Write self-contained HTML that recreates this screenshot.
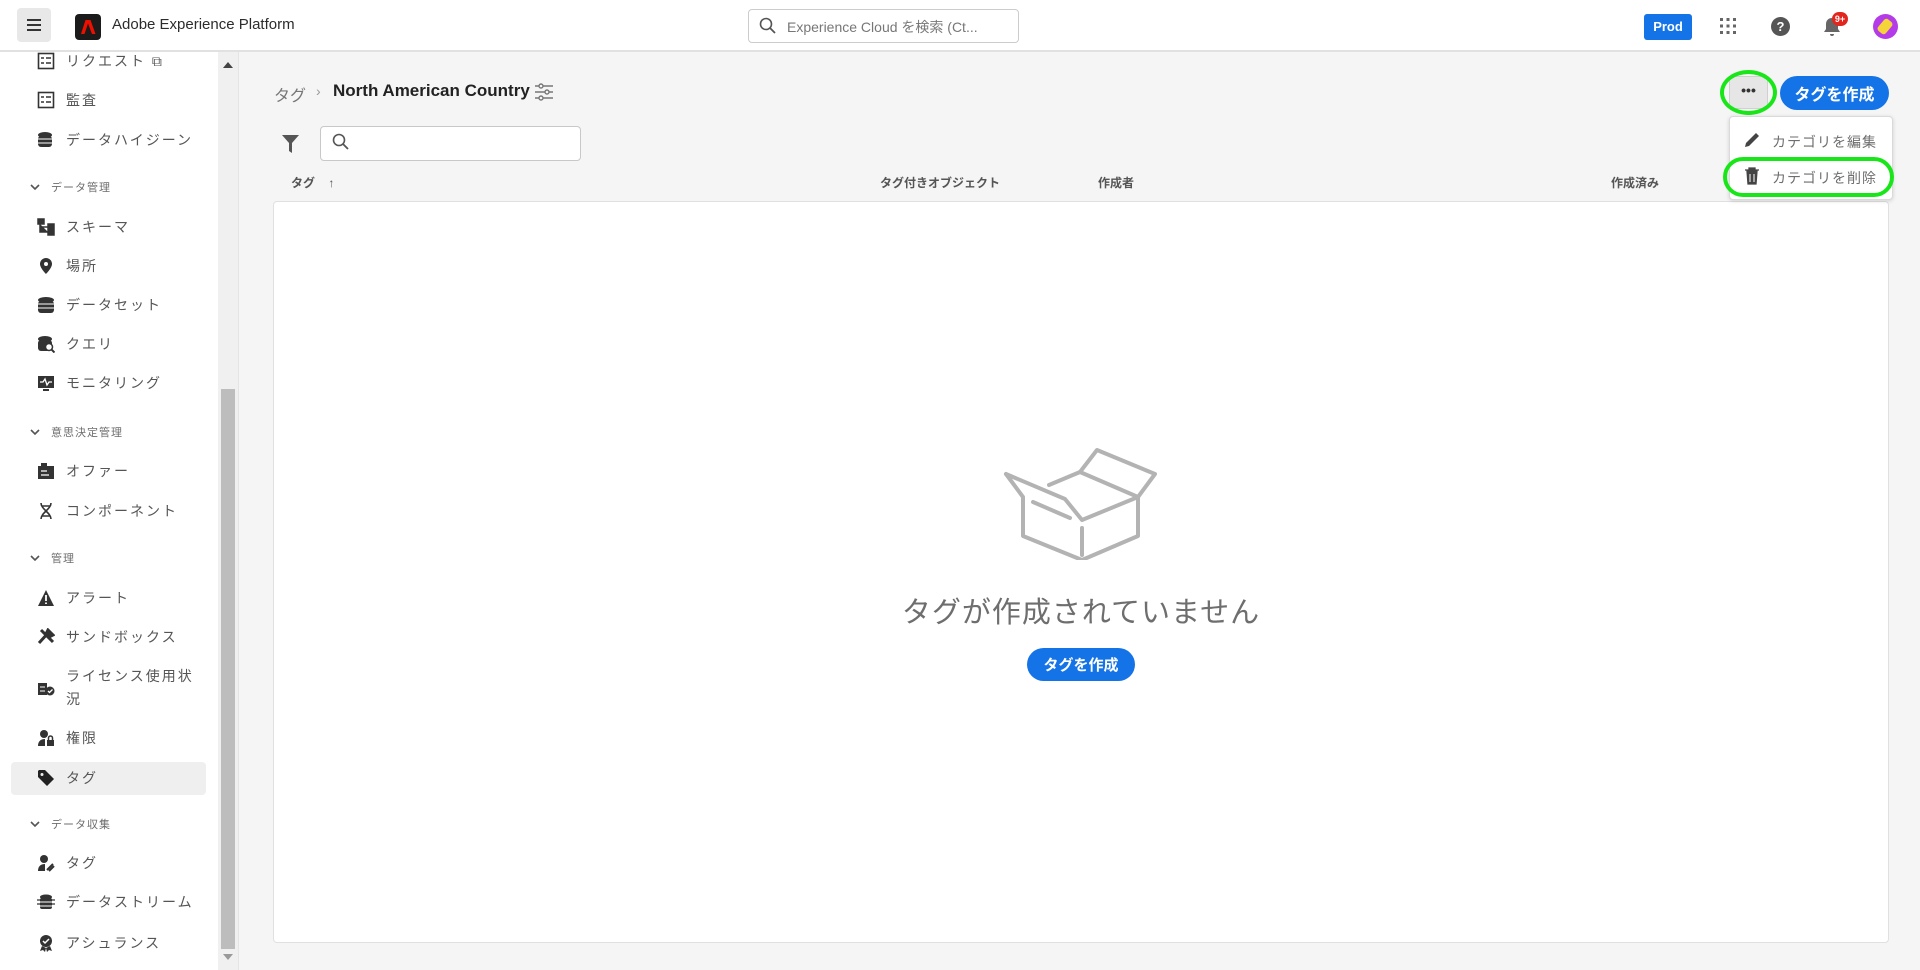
<!DOCTYPE html>
<html><head><meta charset="utf-8"><style>
*{box-sizing:border-box;margin:0;padding:0}
body{width:1920px;height:970px;overflow:hidden;background:#f5f5f5;font-family:"Liberation Sans","Noto Sans CJK JP",sans-serif;position:relative;color:#2c2c2c}
.abs{position:absolute}
header{position:absolute;left:0;top:0;width:1920px;height:52px;background:#fff;border-bottom:2px solid #e1e1e1}
.side{position:absolute;left:0;top:52px;width:218px;height:918px;background:#fff}
.sb{position:absolute;left:218px;top:52px;width:21px;height:918px;background:#f0f0f0;border-right:1px solid #e4e4e4}
.item{position:absolute;left:66px;font-size:14px;letter-spacing:2px;color:#555;transform:translateY(-50%)}
.ic{position:absolute;left:37px;width:18px;height:18px;transform:translateY(-50%)}
.sec{position:absolute;left:51px;font-size:11px;letter-spacing:1px;color:#6e6e6e;transform:translateY(-50%)}
.chev{position:absolute;left:30px;width:10px;height:10px;transform:translateY(-50%)}
.btn{position:absolute;background:#1473e6;color:#fff;font-weight:bold;border-radius:18px;font-size:15px;display:flex;align-items:center;justify-content:center}
.col{position:absolute;top:174px;font-size:12px;font-weight:bold;color:#555}
</style></head><body>
<header>
 <div class="abs" style="left:17px;top:8px;width:34px;height:34px;background:#e8e8e8;border-radius:4px"></div>
 <div class="abs" style="left:27px;top:19px;width:14px;height:2px;background:#333;box-shadow:0 5px 0 #333,0 10px 0 #333"></div>
 <div class="abs" style="left:75px;top:14px;width:26px;height:26px;background:#1b1b1b;border-radius:4px"></div>
 <svg class="abs" style="left:80px;top:19px" width="16" height="16" viewBox="0 0 16 16"><path d="M5.5 1h5l5 14h-3.5L8 4.5 4.5 15H1z" fill="#eb1000"/></svg>
 <div class="abs" style="left:112px;top:16px;font-size:15px;color:#2c2c2c">Adobe Experience Platform</div>
 <div class="abs" style="left:748px;top:9px;width:271px;height:34px;border:1px solid #ccc;border-radius:4px;background:#fff"></div>
 <svg class="abs" style="left:759px;top:17px" width="18" height="18" viewBox="0 0 18 18"><circle cx="7" cy="7" r="5.5" fill="none" stroke="#555" stroke-width="1.6"/><path d="M11 11l5 5" stroke="#555" stroke-width="1.8"/></svg>
 <div class="abs" style="left:787px;top:17px;font-size:14px;color:#777">Experience Cloud を検索 (Ct...</div>
 <div class="abs" style="left:1644px;top:14px;width:48px;height:26px;background:#1473e6;border-radius:3px;color:#fff;font-weight:bold;font-size:13px;text-align:center;line-height:26px">Prod</div>
 <svg class="abs" style="left:1719px;top:17px" width="18" height="18" viewBox="0 0 18 18" fill="#666"><rect x="1" y="1" width="3" height="3"/><rect x="7.5" y="1" width="3" height="3"/><rect x="14" y="1" width="3" height="3"/><rect x="1" y="7.5" width="3" height="3"/><rect x="7.5" y="7.5" width="3" height="3"/><rect x="14" y="7.5" width="3" height="3"/><rect x="1" y="14" width="3" height="3"/><rect x="7.5" y="14" width="3" height="3"/><rect x="14" y="14" width="3" height="3"/></svg>
 <div class="abs" style="left:1771px;top:17px;width:19px;height:19px;border-radius:50%;background:#555;color:#fff;font-weight:bold;font-size:13px;text-align:center;line-height:19px">?</div>
 <svg class="abs" style="left:1822px;top:16px" width="20" height="22" viewBox="0 0 20 22"><path d="M10 2c-4 0-6 3-6 6v5l-2 3h16l-2-3V8c0-3-2-6-6-6z M8 18a2 2 0 004 0z" fill="#666"/></svg>
 <div class="abs" style="left:1832px;top:12px;width:16px;height:14px;border-radius:7px;background:#e0261e;color:#fff;font-size:9px;font-weight:bold;text-align:center;line-height:14px">9+</div>
 <div class="abs" style="left:1873px;top:14px;width:25px;height:25px;border-radius:50%;background:#b43ce8"></div>
 <div class="abs" style="left:1880px;top:19px;width:10px;height:15px;background:#f5d43a;border-radius:3px;transform:rotate(40deg)"></div>
</header>

<div class="side"></div>
<div class="sb"><div class="abs" style="left:3px;top:337px;width:14px;height:560px;background:#bdbdbd"></div>
 <div class="abs" style="left:5px;top:10px;width:0;height:0;border-left:5px solid transparent;border-right:5px solid transparent;border-bottom:6px solid #444"></div>
 <div class="abs" style="left:5px;top:902px;width:0;height:0;border-left:5px solid transparent;border-right:5px solid transparent;border-top:6px solid #999"></div>
</div>

<div class="abs" style="left:11px;top:762px;width:195px;height:33px;background:#efefef;border-radius:4px"></div>

<svg class="ic" style="top:61px" viewBox="0 0 18 18"><rect x="1.5" y="1.5" width="15" height="15" fill="none" stroke="#333" stroke-width="1.6"/><path d="M4 6h3M4 11h3M9 6h5M9 11h5" stroke="#333" stroke-width="1.5"/></svg>
<div class="item" style="top:61px">リクエスト ⧉</div>
<svg class="ic" style="top:100px" viewBox="0 0 18 18"><rect x="1.5" y="1.5" width="15" height="15" fill="none" stroke="#333" stroke-width="1.6"/><path d="M4 6h3M4 11h3M9 6h5M9 11h5" stroke="#333" stroke-width="1.5"/></svg>
<div class="item" style="top:100px">監査</div>
<svg class="ic" style="top:140px" viewBox="0 0 18 18"><ellipse cx="8" cy="4" rx="7" ry="3" fill="#333"/><rect x="1" y="5" width="14" height="11" rx="3" fill="#333"/><path d="M1 8h14M1 12h14" stroke="#fff"/></svg>
<div class="item" style="top:140px">データハイジーン</div>
<svg class="chev" style="top:187px" viewBox="0 0 10 10"><path d="M1 3l4 4 4-4" fill="none" stroke="#555" stroke-width="1.6"/></svg>
<div class="sec" style="top:187px">データ管理</div>
<svg class="ic" style="top:227px" viewBox="0 0 18 18"><path d="M1 1h6v5H1zM11 6h6v5h-6zM11 12h6v5h-6zM3 6v8h8M3 9h8" fill="#333" stroke="#333" stroke-width="1.5"/></svg>
<div class="item" style="top:227px">スキーマ</div>
<svg class="ic" style="top:266px" viewBox="0 0 18 18"><path d="M9 1a6 6 0 00-6 6c0 4 6 10 6 10s6-6 6-10a6 6 0 00-6-6zm0 4a2 2 0 110 4 2 2 0 010-4z" fill="#333"/></svg>
<div class="item" style="top:266px">場所</div>
<svg class="ic" style="top:305px" viewBox="0 0 18 18"><ellipse cx="9" cy="4" rx="8" ry="3" fill="#333"/><rect x="1" y="5" width="16" height="12" rx="3" fill="#333"/><path d="M1 8h16M1 12h16" stroke="#fff"/></svg>
<div class="item" style="top:305px">データセット</div>
<svg class="ic" style="top:344px" viewBox="0 0 18 18"><ellipse cx="8" cy="4" rx="7" ry="3" fill="#333"/><rect x="1" y="5" width="14" height="11" rx="3" fill="#333"/><circle cx="12" cy="12" r="3.5" fill="#fff" stroke="#333" stroke-width="1.5"/><path d="M14.5 14.5l3 3" stroke="#333" stroke-width="2"/></svg>
<div class="item" style="top:344px">クエリ</div>
<svg class="ic" style="top:383px" viewBox="0 0 18 18"><rect x="1" y="2" width="16" height="12" fill="#333"/><path d="M3 8h3l2-3 2 6 2-3h3" fill="none" stroke="#fff" stroke-width="1.3"/><rect x="6" y="15" width="6" height="2" fill="#333"/></svg>
<div class="item" style="top:383px">モニタリング</div>
<svg class="chev" style="top:432px" viewBox="0 0 10 10"><path d="M1 3l4 4 4-4" fill="none" stroke="#555" stroke-width="1.6"/></svg>
<div class="sec" style="top:432px">意思決定管理</div>
<svg class="ic" style="top:471px" viewBox="0 0 18 18"><rect x="1" y="4" width="16" height="13" fill="#333"/><rect x="4" y="1" width="6" height="4" fill="#333"/><path d="M4 9h6M4 13h8" stroke="#fff" stroke-width="1.3"/></svg>
<div class="item" style="top:471px">オファー</div>
<svg class="ic" style="top:511px" viewBox="0 0 18 18"><path d="M4 1c0 6 10 10 10 16M14 1c0 6-10 10-10 16M5 4h8M5 14h8" fill="none" stroke="#333" stroke-width="1.6"/></svg>
<div class="item" style="top:511px">コンポーネント</div>
<svg class="chev" style="top:558px" viewBox="0 0 10 10"><path d="M1 3l4 4 4-4" fill="none" stroke="#555" stroke-width="1.6"/></svg>
<div class="sec" style="top:558px">管理</div>
<svg class="ic" style="top:598px" viewBox="0 0 18 18"><path d="M9 1L17 17H1z" fill="#333"/><path d="M9 6v6M9 13.5v1.5" stroke="#fff" stroke-width="1.8"/></svg>
<div class="item" style="top:598px">アラート</div>
<svg class="ic" style="top:637px" viewBox="0 0 18 18"><path d="M2 15L12 4M4 2l12 12M11 2l5 5-2 1-4-4z" stroke="#333" stroke-width="3" fill="#333"/></svg>
<div class="item" style="top:637px">サンドボックス</div>
<svg class="ic" style="top:688px" viewBox="0 0 18 18"><rect x="1" y="4" width="9" height="12" fill="#333"/><path d="M3 8h5M3 12h5" stroke="#fff"/><circle cx="13" cy="12" r="4.5" fill="#333"/><path d="M11 12l1.5 1.5 3-3" stroke="#fff" fill="none" stroke-width="1.3"/></svg>
<div class="item" style="top:676px">ライセンス使用状</div>
<div class="item" style="top:699px">況</div>
<svg class="ic" style="top:738px" viewBox="0 0 18 18"><circle cx="7" cy="5" r="4" fill="#333"/><path d="M1 17c0-5 3-7 7-7v7z" fill="#333"/><rect x="10" y="11" width="7" height="6" fill="#333"/><path d="M11.5 11V9a2 2 0 014 0v2" fill="none" stroke="#333" stroke-width="1.5"/></svg>
<div class="item" style="top:738px">権限</div>
<svg class="ic" style="top:778px" viewBox="0 0 18 18"><path d="M1 2v6l9 9 7-7-9-9H2zM5 4a1.5 1.5 0 110 3 1.5 1.5 0 010-3z" fill="#222"/></svg>
<div class="item" style="top:778px">タグ</div>
<svg class="chev" style="top:824px" viewBox="0 0 10 10"><path d="M1 3l4 4 4-4" fill="none" stroke="#555" stroke-width="1.6"/></svg>
<div class="sec" style="top:824px">データ収集</div>
<svg class="ic" style="top:863px" viewBox="0 0 18 18"><circle cx="7" cy="5" r="4" fill="#333"/><path d="M1 17c0-5 3-7 7-7v7z" fill="#333"/><path d="M10 16l6-6M12 17l5-5" stroke="#333" stroke-width="2"/></svg>
<div class="item" style="top:863px">タグ</div>
<svg class="ic" style="top:902px" viewBox="0 0 18 18"><ellipse cx="9" cy="4" rx="6" ry="2.5" fill="#333"/><rect x="3" y="5" width="12" height="11" rx="2" fill="#333"/><path d="M0 7h4M0 11h4M14 7h4M14 11h4" stroke="#333" stroke-width="1.3"/><path d="M3 9h12M3 13h12" stroke="#fff"/></svg>
<div class="item" style="top:902px">データストリーム</div>
<svg class="ic" style="top:943px" viewBox="0 0 18 18"><circle cx="9" cy="7" r="6" fill="#333"/><path d="M6 7l2 2 4-4" stroke="#fff" fill="none" stroke-width="1.5"/><path d="M5 12l-2 5 3-1 2 2 1-4M13 12l2 5-3-1-2 2-1-4" fill="#333"/></svg>
<div class="item" style="top:943px">アシュランス</div>

<div class="abs" style="left:274px;top:82px;font-size:16px;color:#777">タグ</div>
<div class="abs" style="left:316px;top:83px;font-size:14px;color:#999">›</div>
<div class="abs" style="left:333px;top:81px;font-size:17px;font-weight:bold;color:#222">North American Country</div>
<svg class="abs" style="left:534px;top:83px" width="20" height="18" viewBox="0 0 20 18"><path d="M1 3h18M1 9h18M1 15h18" stroke="#777" stroke-width="1.4"/><circle cx="7" cy="3" r="2" fill="#f5f5f5" stroke="#777" stroke-width="1.4"/><circle cx="13" cy="9" r="2" fill="#f5f5f5" stroke="#777" stroke-width="1.4"/><circle cx="7" cy="15" r="2" fill="#f5f5f5" stroke="#777" stroke-width="1.4"/></svg>

<svg class="abs" style="left:282px;top:135px" width="17" height="18" viewBox="0 0 17 18"><path d="M0 0h17L10 8v10L7 16V8z" fill="#555"/></svg>
<div class="abs" style="left:320px;top:126px;width:261px;height:35px;border:1px solid #c8c8c8;border-radius:4px;background:#fff"></div>
<svg class="abs" style="left:332px;top:133px" width="18" height="18" viewBox="0 0 18 18"><circle cx="7" cy="7" r="5.5" fill="none" stroke="#555" stroke-width="1.6"/><path d="M11 11l5 5" stroke="#555" stroke-width="1.8"/></svg>

<div class="col" style="left:291px">タグ <span style="margin-left:10px">↑</span></div>
<div class="col" style="left:880px">タグ付きオブジェクト</div>
<div class="col" style="left:1098px">作成者</div>
<div class="col" style="left:1611px">作成済み</div>

<div class="abs" style="left:273px;top:201px;width:1616px;height:742px;background:#fff;border:1px solid #e0e0e0;border-radius:4px"></div>

<svg class="abs" style="left:980px;top:430px" width="200" height="130" viewBox="980 430 200 130"><g fill="none" stroke="#b3b3b3" stroke-width="4" stroke-linejoin="round" stroke-linecap="round"><path d="M1006 474L1065 499L1082 520L1138 497"/><path d="M1006 474L1023 497V536L1082 560L1138 536V497"/><path d="M1033 502L1070 518"/><path d="M1049 485L1080 472L1138 497"/><path d="M1080 472L1097 450L1155 474L1138 497"/><path d="M1082 528V555"/></g></svg>
<div class="abs" style="left:781px;top:589px;width:600px;font-size:29px;color:#6e6e6e;letter-spacing:1px;text-align:center">タグが作成されていません</div>
<div class="btn" style="left:1027px;top:648px;width:108px;height:33px">タグを作成</div>

<div class="abs" style="left:1729px;top:76px;width:39px;height:33px;background:#e6e6e6;border:1px solid #d0d0d0;border-radius:4px;text-align:center;font-weight:bold;font-size:14px;line-height:26px;color:#333">•••</div>
<div class="abs" style="left:1720px;top:70px;width:57px;height:45px;border:4px solid #19e619;border-radius:50%"></div>
<div class="btn" style="left:1780px;top:76px;width:109px;height:34px;font-size:16px">タグを作成</div>

<div class="abs" style="left:1729px;top:116px;width:164px;height:84px;background:#fff;border:1px solid #dadada;border-radius:4px;box-shadow:0 1px 4px rgba(0,0,0,.15)"></div>
<svg class="abs" style="left:1743px;top:131px" width="18" height="18" viewBox="0 0 18 18"><path d="M2 16l1-4L13 2l3 3L6 15z" fill="#444"/></svg>
<div class="abs" style="left:1772px;top:132px;font-size:14px;letter-spacing:1px;color:#6e6e6e">カテゴリを編集</div>
<svg class="abs" style="left:1744px;top:167px" width="16" height="18" viewBox="0 0 16 18"><path d="M1 3h14M5 3V1h6v2M3 4l1 13h8l1-13z" fill="#444" stroke="#444" stroke-width="1.3"/><path d="M6 7v8M10 7v8" stroke="#fff"/></svg>
<div class="abs" style="left:1772px;top:168px;font-size:14px;letter-spacing:1px;color:#6e6e6e">カテゴリを削除</div>
<div class="abs" style="left:1723px;top:157px;width:171px;height:40px;border:4px solid #19e619;border-radius:20px"></div>
</body></html>
